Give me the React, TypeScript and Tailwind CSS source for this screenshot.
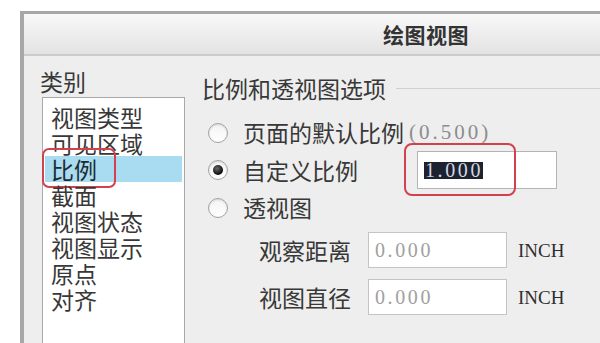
import React from "react";

const cjk = "font-['Noto_Sans_CJK_SC','Noto_Sans_CJK_JP',sans-serif]";
const serif = "font-['Liberation_Serif',serif]";

function Radio({ checked }: { checked?: boolean }) {
  return (
    <div className="w-[20px] h-[20px] rounded-full border border-[#a2a2a2] bg-linear-to-b from-[#f4f4f4] to-white flex items-center justify-center shrink-0 shadow-[inset_0_1px_2px_rgba(0,0,0,0.12)]">
      {checked && (
        <div className="w-[10px] h-[10px] rounded-full bg-[radial-gradient(circle_at_40%_35%,#6a6a6a,#0a0a0a_70%)]" />
      )}
    </div>
  );
}

const items = ["视图类型", "可见区域", "比例", "截面", "视图状态", "视图显示", "原点", "对齐"];

export default function App() {
  return (
    <div className={`w-[600px] h-[343px] overflow-hidden bg-white pt-[11px] pl-[20px] ${cjk} text-[#383838]`}>
      <div className="w-[805px] h-[400px] border-t-[3px] border-l-[4px] border-[#a7a7a7] flex flex-col bg-[#eeeeee]">
        <div className="h-[42px] shrink-0 bg-linear-to-b from-[#f8f8f8] to-[#e3e3e3] border-b-2 border-[#cbcbcb] flex items-center justify-center">
          <span className="text-[21px] font-bold leading-none text-[#333] tracking-[0.5px] pl-[3px]">绘图视图</span>
        </div>
        <div className="flex flex-1">
          <div className="pl-[16px] pt-[12px] shrink-0">
            <div className="text-[23px] leading-[26px]">类别</div>
            <div className="mt-[3px] ml-[2px] w-[143px] h-[260px] border border-[#a9a9a9] bg-white px-[2px] pt-[6px]">
              {items.map((t) => (
                <div
                  key={t}
                  className={`relative h-[26px] flex items-center text-[23px] leading-none pl-[6px] whitespace-nowrap ${t === "比例" ? "bg-[#a9dcf1] text-[#1e2a33]" : ""}`}
                >
                  {t}
                  {t === "比例" && (
                    <div className="absolute left-[-3px] top-[-8px] w-[74px] h-[40px] border-2 border-[#d3414c] rounded-[7px]" />
                  )}
                </div>
              ))}
            </div>
          </div>
          <div className="flex-1 pl-[17px] pt-[18px]">
            <div className="flex items-center">
              <span className="text-[23px] leading-[28px] whitespace-nowrap">比例和透视图选项</span>
              <div className="flex-1 h-px bg-[#cfcfcf] ml-[10px]" />
            </div>
            <div className="mt-[12px] pl-[6px]">
              <div className="h-[37px] flex items-center">
                <Radio />
                <span className="ml-[15px] text-[23px] leading-none whitespace-nowrap">页面的默认比例</span>
                <span className={`ml-[5px] ${serif} text-[21px] tracking-[3px] text-[#8c8c8c] leading-none`}>(0.500)</span>
              </div>
              <div className="h-[38px] flex items-center">
                <Radio checked />
                <span className="ml-[15px] text-[23px] leading-none whitespace-nowrap">自定义比例</span>
                <div className="relative ml-[59px] w-[140px] h-[38px] border border-[#b4b4b4] bg-white flex items-center pl-[6px]">
                  <span className={`${serif} text-[20px] tracking-[2.6px] leading-[17px] bg-[#1c2230] text-[#d2d8e4] pl-px`}>1.000</span>
                  <div className="absolute left-[-14px] top-[-9px] w-[112px] h-[53px] border-2 border-[#d3414c] rounded-[8px]" />
                </div>
              </div>
              <div className="h-[37px] flex items-center">
                <Radio />
                <span className="ml-[15px] text-[23px] leading-none whitespace-nowrap">透视图</span>
              </div>
            </div>
            <div className="mt-[6px] flex flex-col gap-[11px]">
              {["观察距离", "视图直径"].map((l) => (
                <div key={l} className="flex items-center">
                  <span className="w-[149px] text-right text-[23px] leading-none whitespace-nowrap">{l}</span>
                  <div className="ml-[17px] w-[139px] h-[36px] border border-[#c4c4c4] bg-white flex items-center pl-[6px]">
                    <span className={`${serif} text-[20px] tracking-[2.6px] text-[#a0a0a0] leading-none`}>0.000</span>
                  </div>
                  <span className={`ml-[11px] ${serif} text-[19px] text-[#2e2e2e] leading-none`}>INCH</span>
                </div>
              ))}
            </div>
          </div>
        </div>
      </div>
    </div>
  );
}
